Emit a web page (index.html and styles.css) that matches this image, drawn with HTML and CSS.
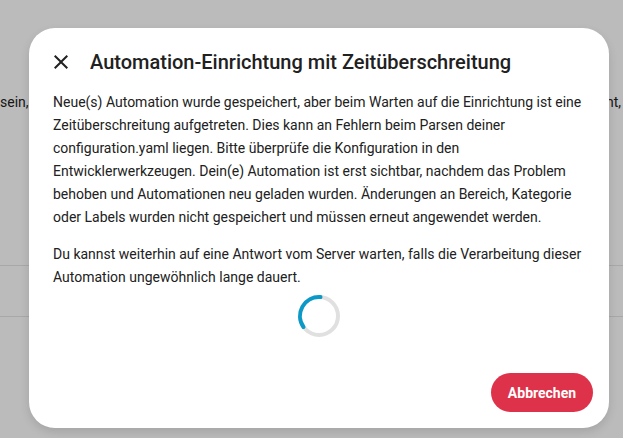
FILE: index.html
```html
<!DOCTYPE html>
<html lang="de">
<head>
<meta charset="utf-8">
<link rel="stylesheet" href="styles.css">
</head>
<body>
<div class="page">
  <div class="bg-row"><span>sein,</span><span>nt,</span></div>
  <div class="bg-line bg-line-1"></div>
  <div class="bg-line bg-line-2"></div>
</div>
<div class="scrim">
  <div class="dialog">
    <div class="header">
      <svg class="close" viewBox="0 0 24 24" width="24" height="24"><path d="M19,6.41L17.59,5L12,10.59L6.41,5L5,6.41L10.59,12L5,17.59L6.41,19L12,13.41L17.59,19L19,17.59L13.41,12L19,6.41Z"/></svg>
      <h2 class="title">Automation-Einrichtung mit Zeitüberschreitung</h2>
    </div>
    <div class="content">
      <p>Neue(s) Automation wurde gespeichert, aber beim Warten auf die Einrichtung ist eine Zeitüberschreitung aufgetreten. Dies kann an Fehlern beim Parsen deiner configuration.yaml liegen. Bitte überprüfe die Konfiguration in den Entwicklerwerkzeugen. Dein(e) Automation ist erst sichtbar, nachdem das Problem behoben und Automationen neu geladen wurden. Änderungen an Bereich, Kategorie oder Labels wurden nicht gespeichert und müssen erneut angewendet werden.</p>
      <p>Du kannst weiterhin auf eine Antwort vom Server warten, falls die Verarbeitung dieser Automation ungewöhnlich lange dauert.</p>
      <div class="spinner-wrap">
        <svg class="spinner" viewBox="0 0 44 44" width="44" height="44">
          <circle cx="22" cy="22" r="19" fill="none" stroke="#e0e0e0" stroke-width="4"/>
          <path d="M23.5 3.06 A19 19 0 0 0 6.5 33" fill="none" stroke="#0b9ac8" stroke-width="4" stroke-linecap="round"/>
        </svg>
      </div>
    </div>
    <div class="actions">
      <button class="btn">Abbrechen</button>
    </div>
  </div>
</div>
</body>
</html>
```
FILE: styles.css
```css
html, body {
  margin: 0;
  padding: 0;
}
body {
  width: 623px;
  height: 438px;
  overflow: hidden;
  font-family: Roboto, "Liberation Sans", sans-serif;
  background: #ffffff;
  position: relative;
}
.page {
  height: 438px;
  background: #fafafa;
}
.bg-row {
  display: flex;
  justify-content: space-between;
  padding: 92px 2px 0 0;
  font-size: 14px;
  line-height: 20px;
  color: #212121;
}
.bg-line {
  position: absolute;
  left: 0;
  right: 0;
  height: 1px;
  background: #e0e0e0;
}
.bg-line-1 { top: 265px; }
.bg-line-2 { top: 316px; }
.scrim {
  position: absolute;
  inset: 0;
  background: rgba(0, 0, 0, 0.25);
  padding: 28px 0 0 29px;
}
.dialog {
  width: 580px;
  height: 400px;
  box-sizing: border-box;
  background: #ffffff;
  border-radius: 26px;
  display: flex;
  flex-direction: column;
  box-shadow: 0 4px 10px rgba(0, 0, 0, 0.12);
}
.header {
  display: flex;
  align-items: center;
  padding: 22px 24px 0 20px;
  height: 24px;
}
.close {
  fill: #212121;
  flex: none;
}
.title {
  margin: 0 0 0 17px;
  font-size: 20px;
  font-weight: 500;
  color: #212121;
  letter-spacing: 0;
  white-space: nowrap;
}
.content {
  padding: 17px 24px 0 24px;
  font-size: 14px;
  line-height: 23px;
  color: #212121;
  flex: 1;
}
.content p {
  margin: 0 0 14px 0;
}
.spinner-wrap {
  display: flex;
  justify-content: center;
  margin-top: -9px;
}
.actions {
  display: flex;
  justify-content: flex-end;
  padding: 0 16px 16px 16px;
}
.btn {
  height: 39px;
  padding: 0 16px;
  min-width: 102px;
  border: none;
  border-radius: 20px;
  background: #de324a;
  color: #ffffff;
  font-family: Roboto, "Liberation Sans", sans-serif;
  font-size: 14px;
  font-weight: 700;
}
```
